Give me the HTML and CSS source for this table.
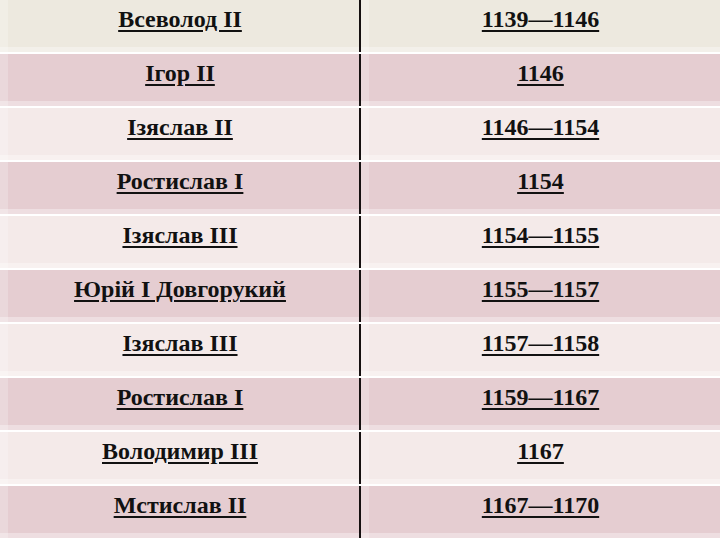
FILE: index.html
```html
<!DOCTYPE html>
<html lang="uk">
<head>
<meta charset="utf-8">
<title>Київські князі</title>
<link rel="stylesheet" href="styles.css">
</head>
<body>
<div class="table">
  <div class="row first"><div class="cell">Всеволод ІІ</div><div class="cell">1139—1146</div></div>
  <div class="row pink"><div class="cell">Ігор ІІ</div><div class="cell">1146</div></div>
  <div class="row light"><div class="cell">Ізяслав ІІ</div><div class="cell">1146—1154</div></div>
  <div class="row pink"><div class="cell">Ростислав І</div><div class="cell">1154</div></div>
  <div class="row light"><div class="cell">Ізяслав ІІІ</div><div class="cell">1154—1155</div></div>
  <div class="row pink"><div class="cell">Юрій І Довгорукий</div><div class="cell">1155—1157</div></div>
  <div class="row light"><div class="cell">Ізяслав ІІІ</div><div class="cell">1157—1158</div></div>
  <div class="row pink"><div class="cell">Ростислав І</div><div class="cell">1159—1167</div></div>
  <div class="row light"><div class="cell">Володимир ІІІ</div><div class="cell">1167</div></div>
  <div class="row pink"><div class="cell">Мстислав ІІ</div><div class="cell">1167—1170</div></div>
</div>
</body>
</html>
```
FILE: styles.css
```css
html, body {
  margin: 0;
  padding: 0;
  background: #ffffff;
}
.table {
  width: 720px;
  height: 540px;
  display: grid;
  grid-template-rows: repeat(10, 54px);
  overflow: hidden;
}
.row {
  display: grid;
  grid-template-columns: 360px 360px;
  border-bottom: 2px solid #ffffff;
}
.row.first { background: #ede9df; }
.row.pink { background: #e5cdd1; }
.row.light { background: #f4eae9; }
.cell {
  font-family: "Liberation Serif", "Times New Roman", serif;
  font-weight: 700;
  font-size: 24px;
  line-height: 24px;
  color: #111111;
  text-align: center;
  padding-top: 7px;
  text-decoration: underline;
  text-decoration-thickness: 2px;
  text-underline-offset: 3px;
  box-shadow: inset 8px 0 0 rgba(255, 255, 255, 0.22), inset 0 -5px 0 rgba(255, 255, 255, 0.35);
}
.cell + .cell {
  border-left: 2px solid #151010;
  margin-left: -1px;
}
```
